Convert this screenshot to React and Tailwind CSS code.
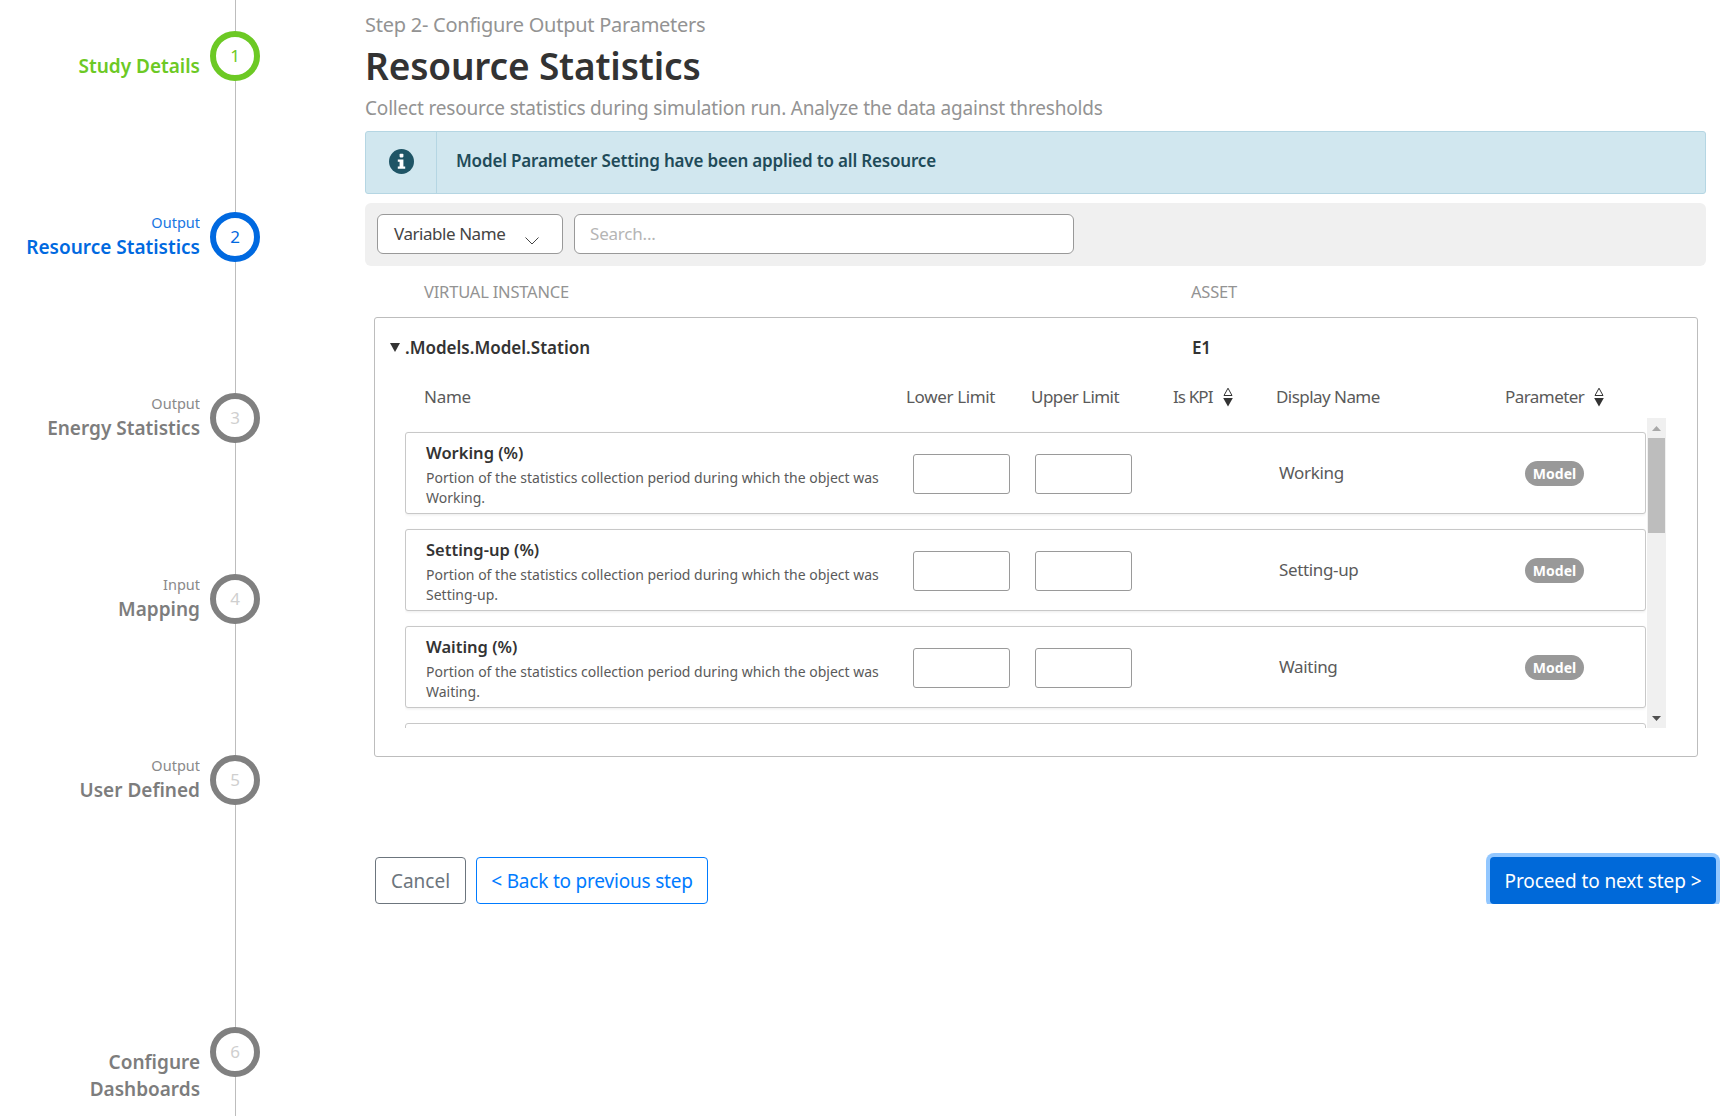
import React from "react";

const FONT = "font-['Noto_Sans','Open_Sans',sans-serif]";

const steps = [
  { n: 1, name: "Study Details", state: "done", h: "h-[181px]" },
  { n: 2, sub: "Output", name: "Resource Statistics", state: "active", h: "h-[181px]" },
  { n: 3, sub: "Output", name: "Energy Statistics", h: "h-[181px]" },
  { n: 4, sub: "Input", name: "Mapping", h: "h-[181px]" },
  { n: 5, sub: "Output", name: "User Defined", h: "h-[272px]" },
  { n: 6, name: "Configure Dashboards", h: "h-[90px]" },
];

const rows = [
  { title: "Working (%)", display: "Working" },
  { title: "Setting-up (%)", display: "Setting-up" },
  { title: "Waiting (%)", display: "Waiting" },
];

function SortIcon() {
  return (
    <svg width="10" height="20" viewBox="0 0 10 20" className="shrink-0">
      <path d="M5 1.2 L9 8.5 H1 Z" fill="none" stroke="#333" strokeWidth="1" />
      <path d="M0.2 11 H9.8 L5 19.5 Z" fill="#333" />
    </svg>
  );
}

function InfoIcon() {
  return (
    <svg width="25" height="25" viewBox="0 0 25 25">
      <circle cx="12.5" cy="12.5" r="12.5" fill="#1f5566" />
      <rect x="10.6" y="4.8" width="3.8" height="3.6" rx="0.8" fill="#fff" />
      <path d="M8.8 10.4 H14.4 V17.4 H16.2 V19.8 H8.8 V17.4 H10.6 V12.8 H8.8 Z" fill="#fff" />
    </svg>
  );
}

function Step({ step }) {
  const text =
    step.state === "done" ? "text-[#6cc924]" : step.state === "active" ? "text-[#0069e0]" : "text-[#7d7d7d]";
  const ring =
    step.state === "done"
      ? "border-[#6cc924] text-[#6cc924]"
      : step.state === "active"
        ? "border-[#0069e0] text-[#0069e0]"
        : "border-[#808080] text-[#cfcfcf]";
  return (
    <div className={`flex justify-end items-start ${step.h}`}>
      <div className={`text-right mr-[10px] -mt-[1px] ${text}`}>
        <div className="h-[23px] text-[14.5px] leading-[22px] font-normal opacity-90">{step.sub}</div>
        <div className="w-[190px] text-[19px] leading-[27px] font-semibold">{step.name}</div>
      </div>
      <div
        className={`relative z-10 flex h-[50px] w-[50px] shrink-0 items-center justify-center rounded-full border-[6px] bg-white text-[17px] ${ring}`}
      >
        {step.n}
      </div>
    </div>
  );
}

function Row({ row }) {
  return (
    <div className="flex h-[82px] shrink-0 items-center overflow-hidden rounded-[3px] border border-[#c8c8c8] bg-white shadow-[0_1px_3px_rgba(0,0,0,0.08)]">
      <div className="h-full w-[507px] shrink-0 pl-[20px] pt-[9px]">
        <div className="text-[16.5px] leading-[22px] font-semibold text-[#333]">{row.title}</div>
        <div className="mt-[4px] w-[470px] text-[14px] leading-[20px] text-[#5a5a5a]">
          Portion of the statistics collection period during which the object was {row.display}.
        </div>
      </div>
      <div className="mt-[1px] h-[40px] w-[97px] shrink-0 rounded-[3px] border border-[#9a9a9a] bg-white" />
      <div className="ml-[25px] mt-[1px] h-[40px] w-[97px] shrink-0 rounded-[3px] border border-[#9a9a9a] bg-white" />
      <div className="ml-[147px] w-[246px] shrink-0 text-[17px] text-[#5a5a5a] tracking-[-0.35px]">{row.display}</div>
      <div className="flex h-[25px] w-[59px] shrink-0 items-center justify-center rounded-full bg-[#999] text-[14px] font-bold text-white">
        Model
      </div>
    </div>
  );
}

export default function App() {
  return (
    <div className={`flex h-[1116px] w-[1733px] overflow-hidden bg-white ${FONT}`}>
      <aside className="relative w-[260px] shrink-0 pt-[31px]">
        <div className="absolute bottom-0 left-[235px] top-0 w-[1px] bg-[#bdbdbd]" />
        {steps.map((s) => (
          <Step key={s.n} step={s} />
        ))}
      </aside>

      <main className="flex-1 pl-[105px] pr-[27px] pt-[10px]">
        <div className="text-[20px] leading-[30px] text-[#939393] tracking-[-0.25px]">Step 2- Configure Output Parameters</div>
        <h1 className="mt-[3px] text-[37px] leading-[46px] font-semibold text-[#333] tracking-[-0.15px]">Resource Statistics</h1>
        <p className="mt-[5px] text-[19px] leading-[28px] text-[#939393] tracking-[-0.18px]">
          Collect resource statistics during simulation run. Analyze the data against thresholds
        </p>

        <div className="mt-[9px] flex h-[63px] items-stretch rounded-[3px] border border-[#b5d6e3] bg-[#d1e7ef]">
          <div className="flex w-[71px] items-center justify-center border-r border-[#b5d6e3] pb-[2px]">
            <InfoIcon />
          </div>
          <div className="pl-[19px] pt-[17px] text-[17px] leading-[24px] font-semibold text-[#1f4b59] tracking-[-0.18px]">
            Model Parameter Setting have been applied to all Resource
          </div>
        </div>

        <div className="mt-[9px] flex h-[63px] items-center gap-[11px] rounded-[6px] bg-[#f0f0f0] px-[12px] pb-[2px]">
          <div className="flex h-[40px] w-[186px] items-center rounded-[6px] border border-[#999] bg-white pl-[16px] text-[17px] text-[#444] tracking-[-0.45px]">
            Variable Name
            <svg width="14" height="8" viewBox="0 0 14 8" className="ml-[20px] mt-[15px]">
              <path d="M0.5 0.5 L7 7 L13.5 0.5" fill="none" stroke="#444" strokeWidth="1" />
            </svg>
          </div>
          <div className="flex h-[40px] w-[500px] items-center rounded-[6px] border border-[#999] bg-white pl-[15px] text-[17px] text-[#b5b5b5] tracking-[-0.2px]">
            Search...
          </div>
        </div>

        <div className="mt-[13px] flex h-[26px] items-center text-[16.5px] text-[#939393] tracking-[-0.2px]">
          <div className="ml-[59px] w-[767px]">VIRTUAL INSTANCE</div>
          <div>ASSET</div>
        </div>

        <div className="ml-[9px] mr-[8px] mt-[12px] h-[440px] rounded-[3px] border border-[#bdbdbd] bg-white">
          <div className="flex h-[56px] items-center pt-[4px] text-[17px] font-semibold text-[#333]">
            <svg width="10" height="9" viewBox="0 0 10 9" className="ml-[15px] mb-[2px]">
              <path d="M0 0 H10 L5 9 Z" fill="#333" />
            </svg>
            <div className="ml-[5px] w-[787px]">.Models.Model.Station</div>
            <div className="tracking-[-0.2px]">E1</div>
          </div>
          <div className="flex h-[44px] items-center pt-[2px] text-[17px] text-[#5a5a5a] tracking-[-0.55px]">
            <div className="ml-[49px] w-[482px] tracking-[-0.25px]">Name</div>
            <div className="w-[125px] tracking-[-0.35px]">Lower Limit</div>
            <div className="w-[142px]">Upper Limit</div>
            <div className="flex w-[103px] items-center gap-[10px] tracking-[-0.9px]">
              Is KPI <SortIcon />
            </div>
            <div className="w-[229px]">Display Name</div>
            <div className="flex items-center gap-[10px]">
              Parameter <SortIcon />
            </div>
          </div>

          <div className="ml-[30px] flex h-[310px]">
            <div className="flex h-full w-[1241px] flex-col gap-[15px] overflow-hidden pt-[14px]">
              {rows.map((r) => (
                <Row key={r.title} row={r} />
              ))}
              <div className="h-[82px] shrink-0 rounded-[3px] border border-[#c8c8c8] bg-white" />
            </div>
            <div className="ml-[1px] flex h-full w-[19px] flex-col bg-[#f0f0f0]">
              <div className="flex h-[20px] items-center justify-center">
                <svg width="9" height="5" viewBox="0 0 9 5"><path d="M4.5 0 L9 5 H0 Z" fill="#a8a8a8" /></svg>
              </div>
              <div className="mx-[1px] h-[95px] bg-[#bdbdbd]" />
              <div className="flex-1" />
              <div className="flex h-[20px] items-center justify-center">
                <svg width="9" height="5" viewBox="0 0 9 5"><path d="M0 0 H9 L4.5 5 Z" fill="#505050" /></svg>
              </div>
            </div>
          </div>
        </div>

        <div className="-mr-[27px] mt-[92px] flex h-[55px] items-start justify-between overflow-hidden pr-[17px] pt-[8px]">
          <div className="ml-[10px] flex gap-[10px]">
            <button className="h-[47px] w-[91px] rounded-[4px] border border-[#6c757d] pt-[2px] text-[19px] text-[#6c757d]">Cancel</button>
            <button className="h-[47px] w-[232px] rounded-[4px] border border-[#007bff] pt-[2px] text-[19px] text-[#007bff] tracking-[-0.2px]">
              &lt; Back to previous step
            </button>
          </div>
          <button className="h-[47px] w-[226px] rounded-[4px] bg-[#0069d9] pt-[2px] text-[19px] text-white tracking-[-0.1px] shadow-[0_0_0_4px_rgba(38,143,255,0.5)]">
            Proceed to next step &gt;
          </button>
        </div>
      </main>
    </div>
  );
}
